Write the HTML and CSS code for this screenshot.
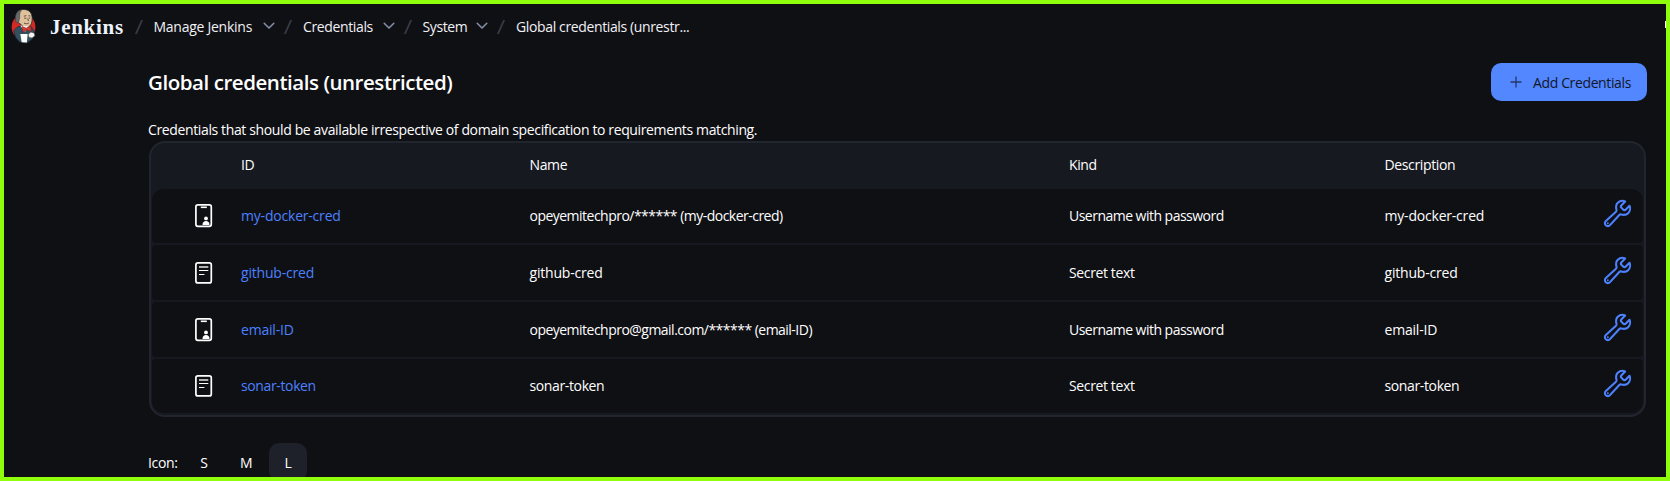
FILE: index.html
```html
<!DOCTYPE html>
<html lang="en">
<head>
<meta charset="utf-8">
<title>Global credentials (unrestricted) [Jenkins]</title>
<link rel="stylesheet" href="styles.css">
</head>
<body>
<svg class="defs" width="0" height="0" aria-hidden="true">
  <symbol id="chevron" viewBox="0 0 12 8"><path d="M1.2 1.2L6 6l4.800-4.800" fill="none" stroke="currentColor" stroke-width="1.500" stroke-linecap="round" stroke-linejoin="round"/></symbol>
  <symbol id="user-cred" viewBox="0 0 20 26">
    <rect x="1.900" y="1.900" width="15.400" height="21.400" rx="2" fill="none" stroke="currentColor" stroke-width="1.700"/>
    <path d="M6.800 4.300h6" stroke="currentColor" stroke-width="1.600"/>
    <circle cx="12" cy="15.400" r="1.900" fill="currentColor"/>
    <path d="M8.500 22c0-3 1.500-4 3.500-4s3.500 1 3.500 4z" fill="currentColor"/>
  </symbol>
  <symbol id="text-cred" viewBox="0 0 20 26">
    <rect x="1.900" y="2.900" width="15.400" height="20" rx="2" fill="none" stroke="currentColor" stroke-width="1.700"/>
    <path d="M5 7h9.300" stroke="currentColor" stroke-width="1.800" opacity=".75"/>
    <path d="M5 10.500h9.300M5 14.500h5.400" stroke="currentColor" stroke-width="1.200"/>
  </symbol>
  <symbol id="wrench" viewBox="0 0 512 512">
    <path d="M393.870 190a32.100 32.100 0 01-45.250 0l-26.570-26.570a32.090 32.090 0 010-45.260L382.190 58a1 1 0 00-.3-1.640c-38.820-16.640-89.150-8.160-121.110 23.570-30.580 30.350-32.320 76-21.120 115.840a31.930 31.930 0 01-9.060 32.080L64 380a48.170 48.170 0 1068 68l153.860-167a31.930 31.930 0 0131.600-9.130c39.540 10.590 84.540 8.600 114.720-21.190 32.490-32 39.500-88.560 23.750-120.930a1 1 0 00-1.600-.26z" fill="none" stroke="currentColor" stroke-width="34" stroke-linecap="round" stroke-miterlimit="10"/>
    <circle cx="96" cy="416" r="16" fill="currentColor"/>
  </symbol>
</svg>

<header class="topbar">
  <svg class="logo" viewBox="0 0 28 38">
    <ellipse cx="13.500" cy="20" rx="12.800" ry="13.500" fill="#d32a26"/>
    <path d="M3 24l4-4 6-1.500 9 1.500 3 5-2 8-6 4.500-8-1.500-4-5z" fill="#335061" stroke="#1d2b33" stroke-width=".8"/>
    <path d="M5.200 9C5.500 4 9 1.200 14 1.200c5.500.2 8.500 3.500 8.800 8.800.3 5-1.300 9-4.300 10.500-3 .8-6-.5-8-3.500C7 16 5 13 5.200 9z" fill="#dfc19c" stroke="#24282b" stroke-width=".9"/>
    <path d="M5 14.500C3.800 7.500 6 2 12 1.200c-3 3-2.500 5.500-2.500 9l-1.500 5.500z" fill="#66686a" stroke="#24282b" stroke-width=".4"/>
    <path d="M13.800 8.500l2.700-.7M18.800 8l2.200.2M14.200 10.600h2.400M19 10.500h1.700M18 11l.9 2.700M14 15.800c1.500 1 3.500 1 5.200 0" stroke="#49372e" stroke-width=".9" fill="none"/>
    <path d="M10 18.500l5 7 4-6" fill="#f7f7f7"/>
    <path d="M12 19.500l4.500 1.800 4.500-2.500.8 6-4.800-1.500-4.300 2.500z" fill="#d33833" stroke="#81201d" stroke-width=".6"/>
    <path d="M10 27.500l8 .2-1 9-5.500-.2z" fill="#fff"/>
    <path d="M18.500 28l3-2.500 3.500 1 .8 3-3 2.300-3.500-.3z" fill="#f5f2ef" stroke="#24282b" stroke-width=".5"/>
  </svg>
  <a class="brand">Jenkins</a>
  <nav class="crumbs">
    <span class="slash"></span><a class="crumb manage">Manage Jenkins</a><svg class="chev"><use href="#chevron"/></svg>
    <span class="slash"></span><a class="crumb creds">Credentials</a><svg class="chev"><use href="#chevron"/></svg>
    <span class="slash"></span><a class="crumb system">System</a><svg class="chev"><use href="#chevron"/></svg>
    <span class="slash"></span><a class="crumb">Global credentials (unrestr...</a>
  </nav>
  <span class="edge-mark"></span>
</header>

<main class="page">
  <div class="heading">
    <h1>Global credentials (unrestricted)</h1>
    <button class="add"><svg viewBox="0 0 12 12"><path d="M6 .5v11M.5 6h11" stroke="currentColor" stroke-width="1.300"/></svg><span>Add Credentials</span></button>
  </div>
  <p class="intro">Credentials that should be available irrespective of domain specification to requirements matching.</p>

  <section class="table">
    <div class="row head"><span></span><span>ID</span><span>Name</span><span>Kind</span><span>Description</span><span></span></div>
    <div class="row first"><svg class="type"><use href="#user-cred"/></svg><a class="loose">my-docker-cred</a><span class="tight">opeyemitechpro/****** (my-docker-cred)</span><span class="tight">Username with password</span><span class="loose">my-docker-cred</span><svg class="tool"><use href="#wrench"/></svg></div>
    <div class="row"><svg class="type"><use href="#text-cred"/></svg><a class="loose">github-cred</a><span class="loose">github-cred</span><span>Secret text</span><span class="loose">github-cred</span><svg class="tool"><use href="#wrench"/></svg></div>
    <div class="row"><svg class="type"><use href="#user-cred"/></svg><a class="loose">email-ID</a><span class="tight">opeyemitechpro@gmail.com/****** (email-ID)</span><span class="tight">Username with password</span><span class="loose">email-ID</span><svg class="tool"><use href="#wrench"/></svg></div>
    <div class="row last"><svg class="type"><use href="#text-cred"/></svg><a>sonar-token</a><span>sonar-token</span><span>Secret text</span><span>sonar-token</span><svg class="tool"><use href="#wrench"/></svg></div>
  </section>

  <div class="sizes"><span class="label">Icon:</span><a>S</a><a>M</a><a class="active">L</a></div>
</main>
</body>
</html>
```

FILE: styles.css
```css
* { box-sizing: border-box; }

body {
  margin: 0;
  width: 1670px;
  height: 481px;
  overflow: hidden;
  border: 4px solid #90ff0c;
  background: #0f1014;
  color: #fff;
  font: 14px/20px "Open Sans", "Noto Sans", sans-serif;
  letter-spacing: -0.37px;
}

.defs { position: absolute; }

.topbar {
  display: flex;
  align-items: center;
  height: 46px;
  padding-left: 7px;
  position: relative;
}

.logo { width: 26px; height: 36px; margin-top: -2px; }

.brand {
  width: 83.5px;
  margin-left: 13px;
  font: bold 21px/24px "Liberation Serif", serif;
  letter-spacing: 0.7px;
  color: #eef4fb;
}

.crumbs { display: flex; align-items: center; color: #f1f1f4; }

.slash {
  width: 1.5px;
  height: 14px;
  margin: 0 14.500px 0 4px;
  background: #343a46;
  transform: skewX(-24deg);
}

.crumb { white-space: nowrap; }
.manage { width: 99.5px; letter-spacing: -0.26px; }
.creds { width: 69.5px; }
.system { width: 43.5px; }

.chev {
  width: 12px;
  height: 8px;
  margin: -2px 8px 0 10px;
  color: #8790ad;
}

.edge-mark {
  position: absolute;
  right: 0;
  top: 17px;
  width: 1px;
  height: 7px;
  background: #fff;
}

.page { padding: 0 19px 0 144px; }

.heading {
  display: flex;
  align-items: center;
  justify-content: space-between;
  height: 64px;
}

h1 {
  margin: 0;
  font-size: 20.5px;
  line-height: 28px;
  font-weight: 600;
  letter-spacing: -0.45px;
}

.add {
  display: flex;
  align-items: center;
  width: 156px;
  height: 38px;
  padding: 0 0 0 19px;
  border: 0;
  border-radius: 10px;
  background: #5387ff;
  color: #12162a;
  font: inherit;
  letter-spacing: inherit;
}

.add svg { width: 12px; height: 12px; margin-right: 11px; opacity: .7; }
.add span { padding-top: 1px; }

.intro { margin: 6px 0 1px; height: 20px; white-space: nowrap; }

.table {
  display: grid;
  grid-template-rows: 44px 54px 55px 55px 54px;
  row-gap: 2px;
  width: 1497px;
  height: 276px;
  margin-left: .5px;
  padding: 0 1px;
  border: 2px solid #21262e;
  border-radius: 16px;
  background: #171920;
}

.row {
  display: grid;
  grid-template-columns: 89.500px 288.500px 539.500px 315.500px 217px auto;
  align-items: center;
  border-radius: 4px;
  background: #0f1014;
}

.head { background: none; }
.first { border-radius: 12px 12px 4px 4px; }
.last { border-radius: 4px 4px 12px 12px; }
.row a { color: #4c80ff; }
.row .loose { letter-spacing: -0.2px; }
.row .tight { letter-spacing: -0.52px; }

.type { width: 20px; height: 26px; margin-left: 42.500px; }
.tool { width: 31px; height: 31px; margin-top: -5px; color: #4d82ff; }

.sizes { display: flex; margin-top: 26px; line-height: 40px; }
.label { width: 37px; }
.sizes a { width: 38px; height: 38px; margin-right: 4px; border-radius: 10px; text-align: center; }
.active { background: #1e2129; }
```
